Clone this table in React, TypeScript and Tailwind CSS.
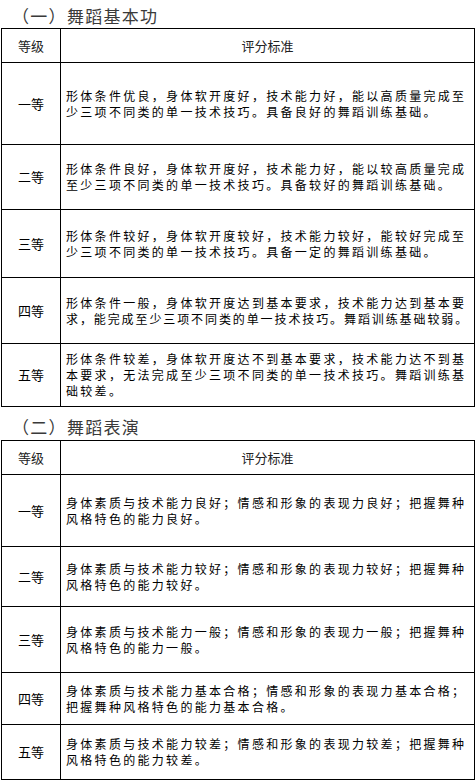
import React from 'react';

type Line = string | [string, string];

type Row = {
    label: string;
    height: string;
    lines: Line[];
};

const basic: Row[] = [
    {
        label: '一等',
        height: 'h-[82px]',
        lines: ['形体条件优良，身体软开度好，技术能力好，能以高质量完成至', '少三项不同类的单一技术技巧。具备良好的舞蹈训练基础。'],
    },
    {
        label: '二等',
        height: 'h-[65px]',
        lines: ['形体条件良好，身体软开度好，技术能力好，能以较高质量完成', '至少三项不同类的单一技术技巧。具备较好的舞蹈训练基础。'],
    },
    {
        label: '三等',
        height: 'h-[68px]',
        lines: ['形体条件较好，身体软开度较好，技术能力较好，能较好完成至', '少三项不同类的单一技术技巧。具备一定的舞蹈训练基础。'],
    },
    {
        label: '四等',
        height: 'h-[66px]',
        lines: [
            '形体条件一般，身体软开度达到基本要求，技术能力达到基本要',
            ['求，能完成至少三项不同类的单一技术技巧。舞蹈训练基础较弱。', 'tracking-[1.9px]'],
        ],
    },
    {
        label: '五等',
        height: 'h-[62px]',
        lines: [
            '形体条件较差，身体软开度达不到基本要求，技术能力达不到基',
            '本要求，无法完成至少三项不同类的单一技术技巧。舞蹈训练基',
            '础较差。',
        ],
    },
];

const perform: Row[] = [
    {
        label: '一等',
        height: 'h-[72px]',
        lines: ['身体素质与技术能力良好；情感和形象的表现力良好；把握舞种', '风格特色的能力良好。'],
    },
    {
        label: '二等',
        height: 'h-[60px]',
        lines: ['身体素质与技术能力较好；情感和形象的表现力较好；把握舞种', '风格特色的能力较好。'],
    },
    {
        label: '三等',
        height: 'h-[66px]',
        lines: ['身体素质与技术能力一般；情感和形象的表现力一般；把握舞种', '风格特色的能力一般。'],
    },
    {
        label: '四等',
        height: 'h-[52px]',
        lines: ['身体素质与技术能力基本合格；情感和形象的表现力基本合格；', '把握舞种风格特色的能力基本合格。'],
    },
    {
        label: '五等',
        height: 'h-[54px]',
        lines: ['身体素质与技术能力较差；情感和形象的表现力较差；把握舞种', '风格特色的能力较差。'],
    },
];

const GradeTable = ({ rows }: { rows: Row[] }) => (
    <div className="ml-[1px] w-[474px] border border-black">
        <div className="flex h-[34px] border-b border-black text-[13px] text-[#222]">
            <div className="w-[59px] shrink-0 border-r border-black flex items-center justify-center">等级</div>
            <div className="flex-1 flex items-center justify-center">评分标准</div>
        </div>
        {rows.map((r, i) => (
            <div key={r.label} className={`flex ${r.height} ${i < rows.length - 1 ? 'border-b border-black' : ''}`}>
                <div className="w-[59px] shrink-0 border-r border-black flex items-center justify-center text-[13px]">
                    {r.label}
                </div>
                <div className="flex-1 flex flex-col justify-center pl-[5px] text-[12px] leading-[16px]">
                    {r.lines.map((l, j) => {
                        const [text, cls] = typeof l === 'string' ? [l, 'tracking-[2.3px]'] : l;
                        return (
                            <div key={j} className={`whitespace-nowrap ${cls}`}>
                                {text}
                            </div>
                        );
                    })}
                </div>
            </div>
        ))}
    </div>
);

const App = () => {
    return (
        <div className="w-[475px] h-[782px] bg-white text-black font-['Noto_Sans_CJK_SC',sans-serif]">
            <div className="h-[28px] pt-[4px] pl-[12px] text-[17px] tracking-[1.3px] leading-[24px] text-[#3a3a3a]">（一）舞蹈基本功</div>
            <GradeTable rows={basic} />
            <div className="h-[33px] pt-[8px] pl-[12px] text-[17px] tracking-[1.3px] leading-[24px] text-[#3a3a3a]">（二）舞蹈表演</div>
            <GradeTable rows={perform} />
        </div>
    );
};

export default App;
